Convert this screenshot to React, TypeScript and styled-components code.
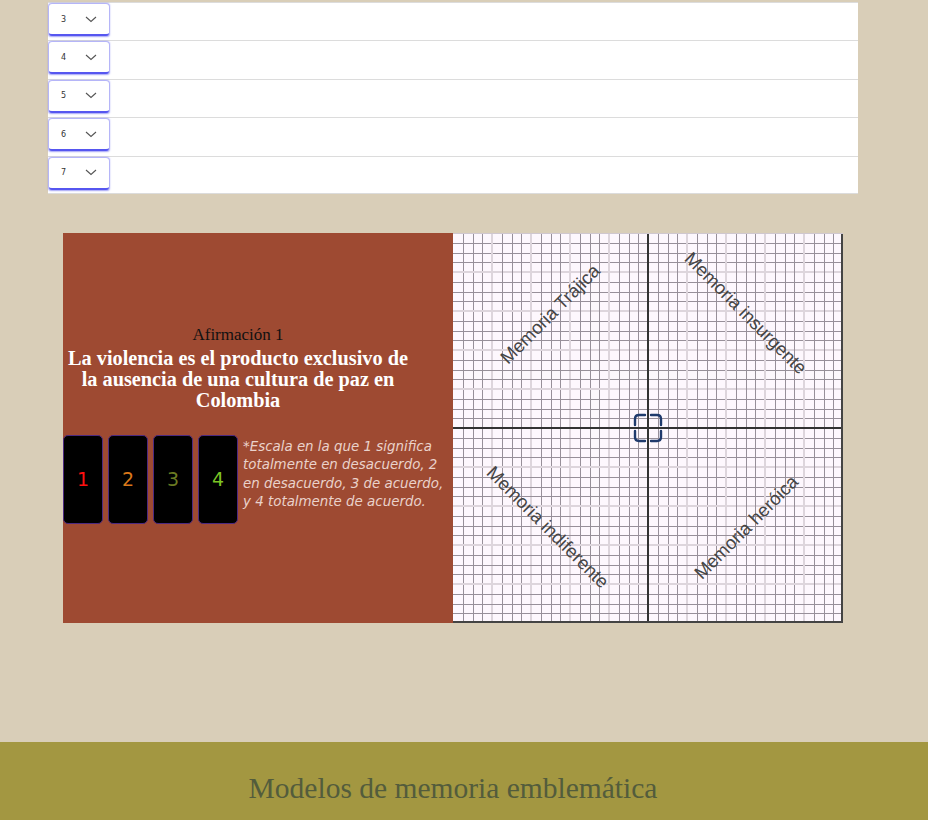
import React from "react";
import styled, { createGlobalStyle } from "styled-components";

const Global = createGlobalStyle`
  html, body { margin: 0; padding: 0; }
  body { background: #d9ceb8; font-family: "Liberation Serif", serif; }
`;

const Page = styled.div`
  width: 928px;
  min-height: 820px;
  padding-top: 2px;
  box-sizing: border-box;
`;

const List = styled.div`
  margin-left: 48px;
  width: 810px;
  background: #fff;
`;

const Row = styled.div`
  height: 38.4px;
  box-sizing: border-box;
  border-top: 1px solid #dcdcdc;
  &:last-child { border-bottom: 1px solid #dcdcdc; }
  display: flex;
  align-items: flex-start;
  padding: 1px 0 0 1px;
`;

const Select = styled.div`
  width: 60px;
  height: 32px;
  box-sizing: border-box;
  background: #fff;
  border-radius: 3px;
  border-bottom: 2px solid #5656f0;
  box-shadow: 0 0 1.5px 0.5px rgba(90, 90, 240, 0.55);
  display: flex;
  align-items: center;
  padding-left: 12px;
  font-family: "DejaVu Sans", sans-serif;
  font-size: 8px;
  color: #333;
`;

const SelectValue = styled.span`
  width: 24px;
`;

const Chevron = () => (
  <svg width="12" height="7" viewBox="0 0 12 7">
    <path d="M1 1 L6 5.5 L11 1" fill="none" stroke="#555" strokeWidth="1.1" />
  </svg>
);

const Card = styled.div`
  margin: 39px 0 0 63px;
  width: 780px;
  height: 390px;
  display: flex;
`;

const Panel = styled.div`
  width: 390px;
  height: 390px;
  background: #9e4a32;
  display: flex;
  flex-direction: column;
  padding-top: 91.6px;
  box-sizing: border-box;
`;

const TextBlock = styled.div`
  width: 350px;
  text-align: center;
`;

const Kicker = styled.div`
  font-family: "Liberation Serif", serif;
  font-size: 17px;
  line-height: 20px;
  color: #111;
`;

const Statement = styled.div`
  margin-top: 3px;
  font-family: "Liberation Serif", serif;
  font-weight: bold;
  font-size: 20.3px;
  line-height: 21px;
  color: #fff;
`;

const ScaleRow = styled.div`
  margin-top: 24px;
  display: flex;
  gap: 5px;
`;

const NumCard = styled.div<{ $c: string }>`
  width: 40px;
  height: 89px;
  box-sizing: border-box;
  background: #000;
  border: 1px solid #4d2a80;
  border-radius: 5px;
  display: flex;
  align-items: center;
  justify-content: center;
  font-family: "DejaVu Sans", sans-serif;
  font-size: 19px;
  color: ${(p) => p.$c};
`;

const Note = styled.div`
  font-family: "DejaVu Sans", sans-serif;
  font-style: italic;
  font-size: 13.4px;
  line-height: 18.5px;
  color: #ead2cb;
  margin-top: 3px;
  white-space: nowrap;
`;

const GridBox = styled.div`
  width: 390px;
  height: 390px;
`;

const Footer = styled.div`
  margin-top: 119px;
  background: #a39741;
  height: 80px;
  padding: 30px 22px 0 0;
  box-sizing: border-box;
  text-align: center;
  font-family: "Liberation Serif", serif;
  font-size: 29.5px;
  color: #535c3c;
`;

const Grid = () => {
  const n = 40;
  const s = 390 / n;
  const lines: React.ReactNode[] = [];
  for (let i = 1; i < n; i++) {
    if (i === 20) continue;
    const light = i % 4 === 0;
    const p = light ? Math.round(i * s) : Math.round(i * s) + 0.5;
    const stroke = light ? "#ddd5dc" : "#978f99";
    const w = light ? 2 : 1;
    lines.push(<line key={"v" + i} x1={p} y1={0} x2={p} y2={390} stroke={stroke} strokeWidth={w} />);
    lines.push(<line key={"h" + i} x1={0} y1={p} x2={390} y2={p} stroke={stroke} strokeWidth={w} />);
  }
  const label = {
    fontFamily: "Liberation Sans, Arial, sans-serif",
    fontSize: 18.5,
    fill: "#454545",
  } as const;
  return (
    <svg width="390" height="390" viewBox="0 0 390 390" style={{ display: "block" }}>
      <rect x="0" y="0" width="390" height="390" fill="#fdf7fd" />
      {lines}
      <line x1="195" y1="0" x2="195" y2="390" stroke="#333" strokeWidth="2" />
      <line x1="0" y1="195" x2="390" y2="195" stroke="#333" strokeWidth="2" />
      <line x1="389" y1="0" x2="389" y2="390" stroke="#444" strokeWidth="2" />
      <line x1="0" y1="389" x2="390" y2="389" stroke="#444" strokeWidth="2" />
      <line x1="0" y1="0.5" x2="390" y2="0.5" stroke="#cfc7cf" strokeWidth="1" />
      <text {...label} x="97" y="81" textAnchor="middle" dominantBaseline="central" transform="rotate(-45 97 81)">Memoria Trájica</text>
      <text {...label} x="293" y="80" textAnchor="middle" dominantBaseline="central" transform="rotate(45 293 80)">Memoria insurgente</text>
      <text {...label} x="95" y="294" textAnchor="middle" dominantBaseline="central" transform="rotate(45 95 294)">Memoria indiferente</text>
      <text {...label} x="293" y="294" textAnchor="middle" dominantBaseline="central" transform="rotate(-45 293 294)">Memoria heróica</text>
      <g fill="none" stroke="#1f3a6c" strokeWidth="2.4" strokeLinecap="round">
        <path d="M182 192 V186 Q182 182 186 182 H192" />
        <path d="M198 182 H204 Q208 182 208 186 V192" />
        <path d="M208 198 V204 Q208 208 204 208 H198" />
        <path d="M192 208 H186 Q182 208 182 204 V198" />
      </g>
    </svg>
  );
};

const rows = ["3", "4", "5", "6", "7"];
const scale = [
  { n: "1", c: "#ff1010" },
  { n: "2", c: "#d9781a" },
  { n: "3", c: "#6a7a22" },
  { n: "4", c: "#7cc424" },
];

export default function App() {
  return (
    <Page>
      <Global />
      <List>
        {rows.map((r) => (
          <Row key={r}>
            <Select>
              <SelectValue>{r}</SelectValue>
              <Chevron />
            </Select>
          </Row>
        ))}
      </List>
      <Card>
        <Panel>
          <TextBlock>
            <Kicker>Afirmación 1</Kicker>
            <Statement>
              La violencia es el producto exclusivo de la ausencia de una cultura de paz en Colombia
            </Statement>
          </TextBlock>
          <ScaleRow>
            {scale.map((s) => (
              <NumCard key={s.n} $c={s.c}>{s.n}</NumCard>
            ))}
            <Note>
              *Escala en la que 1 significa
              <br />
              totalmente en desacuerdo, 2
              <br />
              en desacuerdo, 3 de acuerdo,
              <br />
              y 4 totalmente de acuerdo.
            </Note>
          </ScaleRow>
        </Panel>
        <GridBox>
          <Grid />
        </GridBox>
      </Card>
      <Footer>Modelos de memoria emblemática</Footer>
    </Page>
  );
}
